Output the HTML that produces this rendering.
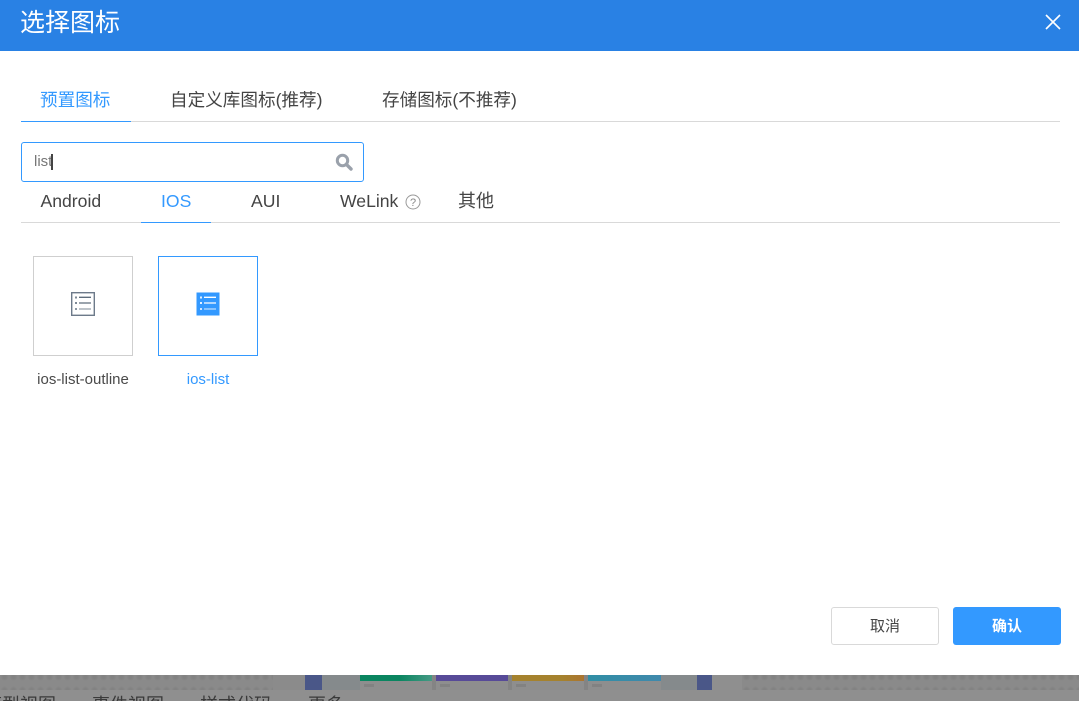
<!DOCTYPE html>
<html lang="zh">
<head>
<meta charset="utf-8">
<style>
html,body{margin:0;padding:0;width:1079px;height:701px;overflow:hidden;background:#8f8f8f}
body{position:relative;font-family:"Liberation Sans","Noto Sans CJK SC",sans-serif;color:#444}
.a{position:absolute;white-space:nowrap}
.line{position:absolute;height:1px;background:#d9d9d9}
.blue{color:#3399ff}
.tab{font-size:17.6px;line-height:24px}
.bt{font-size:18px;line-height:24px;color:#3a3a3a;top:693px}
.dots{position:absolute;top:675px;height:15px;background-color:#8a8a8a;background-image:radial-gradient(circle,#828282 0,#828282 1.5px,#8a8a8a 4px);background-size:9px 13px;background-position:0 -4.5px}
.card{position:absolute;top:675px;width:72px;height:15px;background:#8e8e8e}
.bar{position:absolute;left:0;top:0;width:100%;height:6px}
.mini{position:absolute;left:4px;top:9px;width:10px;height:3px;background:#828282}
</style>
</head>
<body>
<!-- background page strip -->
<div class="dots" style="left:0;width:273px"></div>
<div class="a" style="left:273px;top:675px;width:32px;height:15px;background:#8b8b8b"></div>
<div class="a" style="left:305px;top:675px;width:17px;height:15px;background:#4a5788"></div>
<div class="a" style="left:322px;top:675px;width:115px;height:15px;background:#858a8c"></div>
<div class="a" style="left:432px;top:675px;width:230px;height:15px;background:#848484"></div>
<div class="card" style="left:360px"><div class="bar" style="background:linear-gradient(90deg,#0a8560 0,#0a8560 55%,#459a85 100%)"></div><div class="mini"></div></div>
<div class="card" style="left:436px"><div class="bar" style="background:#574a98"></div><div class="mini"></div></div>
<div class="card" style="left:512px"><div class="bar" style="background:linear-gradient(90deg,#a5822e 0,#a5822e 70%,#ab7430 100%)"></div><div class="mini"></div></div>
<div class="card" style="left:588px;width:73px"><div class="bar" style="background:linear-gradient(90deg,#308ea5 0,#4089ac 100%)"></div><div class="mini"></div></div>
<div class="a" style="left:661px;top:675px;width:36px;height:15px;background:#858a8c"></div>
<div class="a" style="left:697px;top:675px;width:15px;height:15px;background:#4a5788"></div>
<div class="a" style="left:712px;top:675px;width:30px;height:15px;background:#8f8f8f"></div>
<div class="dots" style="left:742px;width:337px"></div>
<div class="a bt" style="left:-16px">模型视图</div>
<div class="a bt" style="left:92px">事件视图</div>
<div class="a bt" style="left:200px">样式代码</div>
<div class="a bt" style="left:308px">更多</div>

<!-- dialog -->
<div class="a" style="left:0;top:0;width:1079px;height:675px;background:#fff"></div>
<div class="a" style="left:0;top:0;width:1079px;height:51px;background:#2981e4"></div>
<div class="a" style="left:20px;top:5px;font-size:25px;line-height:36px;color:#fff">选择图标</div>
<svg class="a" style="left:1044px;top:13px" width="18" height="18" viewBox="0 0 18 18"><path d="M2 2L16 16M16 2L2 16" stroke="#fff" stroke-width="1.6" fill="none"/></svg>

<!-- top tabs -->
<div class="a blue tab" style="left:40px;top:88px">预置图标</div>
<div class="a tab" style="left:170px;top:88px;width:153px">自定义库图标(推荐)</div>
<div class="a tab" style="left:382px;top:88px">存储图标(不推荐)</div>
<div class="line" style="left:21px;top:121px;width:1039px"></div>
<div class="a" style="left:21px;top:121px;width:110px;height:1px;background:#3399ff"></div>

<!-- search -->
<div class="a" style="left:21px;top:142px;width:341px;height:38px;border:1px solid #3399ff;border-radius:3px;background:#fff"></div>
<div class="a" style="left:34px;top:152px;font-size:15px;line-height:20px;color:#777">list</div>
<div class="a" style="left:51px;top:154px;width:2px;height:16px;background:#444"></div>
<svg class="a" style="left:335px;top:153px" width="18" height="18" viewBox="0 0 18 18"><circle cx="7.5" cy="7.5" r="5.2" fill="none" stroke="#9aa1ab" stroke-width="3"/><path d="M11.8 11.8L16 16" stroke="#9aa1ab" stroke-width="3.4" stroke-linecap="round"/></svg>

<!-- sub tabs -->
<div class="a tab" style="left:40.5px;top:189px">Android</div>
<div class="a blue tab" style="left:161px;top:189px">IOS</div>
<div class="a tab" style="left:251px;top:189px">AUI</div>
<div class="a tab" style="left:340px;top:189px">WeLink</div>
<svg class="a" style="left:405px;top:194px" width="16" height="16" viewBox="0 0 16 16"><circle cx="8" cy="8" r="7" fill="none" stroke="#999" stroke-width="1"/><text x="8" y="12" font-size="11" text-anchor="middle" fill="#888" font-family="Liberation Sans">?</text></svg>
<div class="a" style="left:458px;top:189px;font-size:18px;line-height:24px">其他</div>
<div class="line" style="left:21px;top:222px;width:1039px"></div>
<div class="a" style="left:141px;top:222px;width:70px;height:1px;background:#3399ff"></div>

<!-- icon cards -->
<div class="a" style="left:33px;top:256px;width:98px;height:98px;border:1px solid #cfcfcf"></div>
<svg class="a" style="left:71px;top:291px" width="24" height="25" viewBox="0 0 24 25">
<rect x="0.7" y="1.7" width="22.6" height="22.6" fill="#fff" stroke="#6d7a8a" stroke-width="1.4"/>
<rect x="4" y="5.5" width="2" height="2" fill="#7d8996"/><rect x="4" y="11" width="2" height="2" fill="#7d8996"/><rect x="4" y="17" width="2" height="2" fill="#8c97a3"/>
<path d="M8 6.3H20M8 12H20" stroke="#5f6d7c" stroke-width="1.3"/><path d="M8 18H20" stroke="#9aa5ae" stroke-width="1.3"/>
</svg>
<div class="a" style="left:23px;top:371px;width:120px;text-align:center;font-size:15px;line-height:18px;color:#4a4a4a">ios-list-outline</div>

<div class="a" style="left:158px;top:256px;width:98px;height:98px;border:1px solid #3399ff"></div>
<svg class="a" style="left:196px;top:291px" width="24" height="25" viewBox="0 0 24 25">
<rect x="0.5" y="1.5" width="23" height="23" fill="#3399ff"/>
<rect x="4" y="5.5" width="2" height="2" fill="#e6f2ff"/><rect x="4" y="11" width="2" height="2" fill="#e6f2ff"/><rect x="4" y="17" width="2" height="2" fill="#cfe6ff"/>
<path d="M8 6.3H20M8 12H20" stroke="#fff" stroke-width="1.3"/><path d="M8 18H20" stroke="#b8dbff" stroke-width="1.3"/>
</svg>
<div class="a blue" style="left:148px;top:371px;width:120px;text-align:center;font-size:15px;line-height:18px">ios-list</div>

<!-- buttons -->
<div class="a" style="left:831px;top:607px;width:106px;height:36px;border:1px solid #d9d9d9;border-radius:3px;background:#fff;text-align:center;font-size:15px;line-height:37px;color:#444">取消</div>
<div class="a" style="left:953px;top:607px;width:108px;height:38px;border-radius:3px;background:#3399ff;text-align:center;font-size:15px;line-height:39px;color:#fff;font-weight:bold">确认</div>
</body>
</html>
